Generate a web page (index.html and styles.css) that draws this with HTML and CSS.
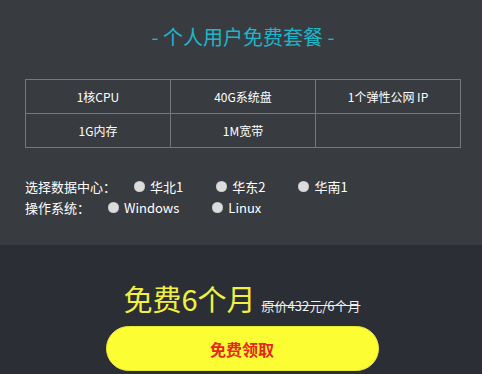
FILE: index.html
```html
<!DOCTYPE html>
<html>
<head>
    <title>个人用户免费套餐</title>
    <link rel="stylesheet" href="styles.css">
</head>
<body>
    <div class="plan">
        <h2 class="plan-title">- 个人用户免费套餐 -</h2>
        <table class="spec-table">
            <tr>
                <td>1核CPU</td>
                <td>40G系统盘</td>
                <td>1个弹性公网 IP</td>
            </tr>
            <tr>
                <td>1G内存</td>
                <td>1M宽带</td>
                <td></td>
            </tr>
        </table>
        <div class="option-row">
            <span class="option-label">选择数据中心：</span>
            <label class="choice"><input type="radio" name="dc">华北1</label>
            <label class="choice"><input type="radio" name="dc">华东2</label>
            <label class="choice"><input type="radio" name="dc">华南1</label>
        </div>
        <div class="option-row">
            <span class="option-label">操作系统：</span>
            <label class="choice"><input type="radio" name="os">Windows</label>
            <label class="choice"><input type="radio" name="os">Linux</label>
        </div>
    </div>

    <div class="offer">
        <div class="price">
            <span class="price-free">免费6个月</span>
            <span class="price-old">原价432元/6个月</span>
        </div>
        <button class="claim-btn">免费领取</button>
    </div>
</body>
</html>
```

FILE: styles.css
```css
body {
    margin: 0;
    background-color: #2b2f35;
    font-family: "Noto Sans CJK SC", "Noto Sans", sans-serif;
    color: #fff;
}

.plan {
    background-color: #383c41;
    height: 245px;
    box-sizing: border-box;
    padding: 22px 21px 0 25px;
}

.plan-title {
    margin: 0;
    text-align: center;
    font-size: 20px;
    font-weight: normal;
    line-height: 30px;
    color: #1fb5c9;
}

.spec-table {
    width: 100%;
    margin-top: 27px;
    border-collapse: collapse;
}

.spec-table td {
    width: 33.3%;
    height: 33px;
    padding: 0;
    border: 1px solid #74777b;
    text-align: center;
    font-size: 12px;
    line-height: 16px;
}

.option-row {
    display: flex;
    align-items: center;
    height: 21px;
    font-size: 13px;
}

.option-row:first-of-type {
    margin-top: 28px;
}

.option-label {
    margin-right: 18px;
}

.choice {
    display: flex;
    align-items: center;
    margin-right: 33px;
}

.choice input {
    appearance: none;
    width: 11px;
    height: 11px;
    margin: 0 5px 0 0;
    border-radius: 50%;
    background-color: #dcdcdc;
    box-shadow: inset 0 0 1px #999;
}

.offer {
    display: flex;
    flex-direction: column;
    align-items: center;
    padding-top: 33px;
}

.price {
    display: flex;
    align-items: baseline;
    margin-left: 2px;
}

.price-free {
    font-size: 29px;
    line-height: 40px;
    color: #f2f040;
}

.price-old {
    margin-left: 6px;
    font-size: 13px;
    text-decoration: line-through;
    color: #eee;
}

.claim-btn {
    width: 273px;
    height: 45px;
    margin-top: 8px;
    margin-left: 2px;
    border: 1px solid #e8e830;
    border-radius: 23px;
    background-color: #fdfd34;
    color: #e8261c;
    font-family: inherit;
    font-size: 16px;
    font-weight: bold;
}
```
